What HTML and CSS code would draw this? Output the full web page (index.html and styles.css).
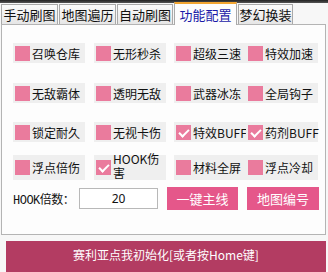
FILE: index.html
```html
<!DOCTYPE html>
<html lang="zh-CN">
<head>
    <meta charset="UTF-8">
    <meta name="viewport" content="width=device-width, initial-scale=1.0">
    <title>功能配置</title>
    <link rel="stylesheet" href="styles.css">
</head>
<body>
    <div class="topbar"></div>
    <div class="tabs">
        <div class="tab t1">手动刷图</div>
        <div class="tab t2">地图遍历</div>
        <div class="tab t3">自动刷图</div>
        <div class="tab active">功能配置</div>
        <div class="tab t5">梦幻换装</div>
    </div>

    <div class="panel">
        <div class="row r1">
            <label class="check"><span class="box"></span><span class="text">召唤仓库</span></label>
            <label class="check"><span class="box"></span><span class="text">无形秒杀</span></label>
            <label class="check"><span class="box"></span><span class="text">超级三速</span></label>
            <label class="check"><span class="box"></span><span class="text">特效加速</span></label>
        </div>
        <div class="row r2">
            <label class="check"><span class="box"></span><span class="text">无敌霸体</span></label>
            <label class="check"><span class="box"></span><span class="text">透明无敌</span></label>
            <label class="check"><span class="box"></span><span class="text">武器冰冻</span></label>
            <label class="check"><span class="box"></span><span class="text">全局钩子</span></label>
        </div>
        <div class="row r3">
            <label class="check"><span class="box"></span><span class="text">锁定耐久</span></label>
            <label class="check"><span class="box"></span><span class="text">无视卡伤</span></label>
            <label class="check"><span class="box on"></span><span class="text">特效BUFF</span></label>
            <label class="check"><span class="box on"></span><span class="text">药剂BUFF</span></label>
        </div>
        <div class="row r4">
            <label class="check"><span class="box"></span><span class="text">浮点倍伤</span></label>
            <label class="check"><span class="box on"></span><span class="text narrow">HOOK伤害</span></label>
            <label class="check"><span class="box"></span><span class="text">材料全屏</span></label>
            <label class="check"><span class="box"></span><span class="text">浮点冷却</span></label>
        </div>

        <div class="controls">
            <span class="hook-label">HOOK倍数：</span>
            <input class="hook-input" type="text" value="20">
            <button class="btn b1">一键主线</button>
            <button class="btn b2">地图编号</button>
        </div>
    </div>

    <button class="init-btn">赛利亚点我初始化[或者按Home键]</button>
</body>
</html>
```

FILE: styles.css
```css
* {
    margin: 0;
    padding: 0;
    box-sizing: border-box;
}

body {
    width: 328px;
    height: 272px;
    overflow: hidden;
    background: #f7f7f7;
    font-family: "Noto Sans CJK SC", "Noto Sans", sans-serif;
    color: #111;
}

.topbar {
    height: 3px;
    background: linear-gradient(#222, #555);
}

/* tab strip */
.tabs {
    display: flex;
    align-items: flex-end;
    height: 21px;
    padding-left: 1px;
    position: relative;
    z-index: 2;
}

.tab {
    height: 20px;
    line-height: 19px;
    font-size: 13px;
    text-align: center;
    border: 1px solid #a9a9a9;
    border-bottom: none;
    background: linear-gradient(#fbfbfb, #e6e6e6);
    margin-right: 1px;
}

.t1 { width: 57px; }
.t2 { width: 57px; }
.t3 { width: 56px; }
.t5 { width: 55px; }

.tab.active {
    width: 63px;
    height: 23px;
    line-height: 22px;
    margin-bottom: -1px;
    margin-right: 1px;
    color: #1a1aa8;
    background: #fdfdfd;
    border-top: 2px solid #f2a531;
}

/* main panel */
.panel {
    width: 325px;
    height: 211px;
    margin-left: 1px;
    border: 1px solid #b4b4b4;
    background: #fdfdfd;
    padding-left: 11px;
    padding-top: 18px;
}

.row {
    display: grid;
    grid-template-columns: 81px 80px 72px 72px;
    height: 20px;
}

.r2 { margin-top: 20px; }
.r3 { margin-top: 19px; }
.r4 { margin-top: 13px; height: 24px; }

.check {
    display: flex;
    align-items: center;
    width: 72px;
    background: #efefef;
    font-size: 12px;
    line-height: 13px;
    white-space: nowrap;
}

.box {
    position: relative;
    flex: none;
    width: 15px;
    height: 15px;
    margin: 0 2px 0 2px;
    background: #ea7b9d;
}

.box.on::after {
    content: "";
    position: absolute;
    left: 3px;
    top: 4px;
    width: 8px;
    height: 4px;
    border-left: 2px solid #fff;
    border-bottom: 2px solid #fff;
    transform: rotate(-45deg);
}

.text.narrow {
    white-space: normal;
    word-break: break-all;
    width: 52px;
    line-height: 14px;
    margin-top: -3px;
}

/* hook row */
.controls {
    display: flex;
    align-items: center;
    margin-top: 8px;
    height: 23px;
}

.hook-label {
    width: 66px;
    font-family: "Liberation Mono", "Noto Sans CJK SC", monospace;
    font-size: 12px;
    letter-spacing: -0.5px;
}

.hook-input {
    width: 79px;
    height: 21px;
    border: 1px solid #b8b8b8;
    background: #fff;
    text-align: center;
    font-family: "Noto Sans", sans-serif;
    font-size: 12px;
    color: #111;
    outline: none;
}

.btn {
    height: 23px;
    border: none;
    background: #e5578a;
    color: #fff;
    font-family: "Noto Sans CJK SC", sans-serif;
    font-size: 13px;
}

.b1 {
    width: 71px;
    margin-left: 9px;
}

.b2 {
    width: 72px;
    margin-left: 9px;
}

.init-btn {
    display: block;
    width: 320px;
    height: 40px;
    margin: 6px 0 0 6px;
    border: none;
    background: #b33c62;
    color: #fff;
    font-family: "Noto Sans CJK SC", sans-serif;
    font-size: 12px;
    line-height: 28px;
    padding-bottom: 12px;
}
```
